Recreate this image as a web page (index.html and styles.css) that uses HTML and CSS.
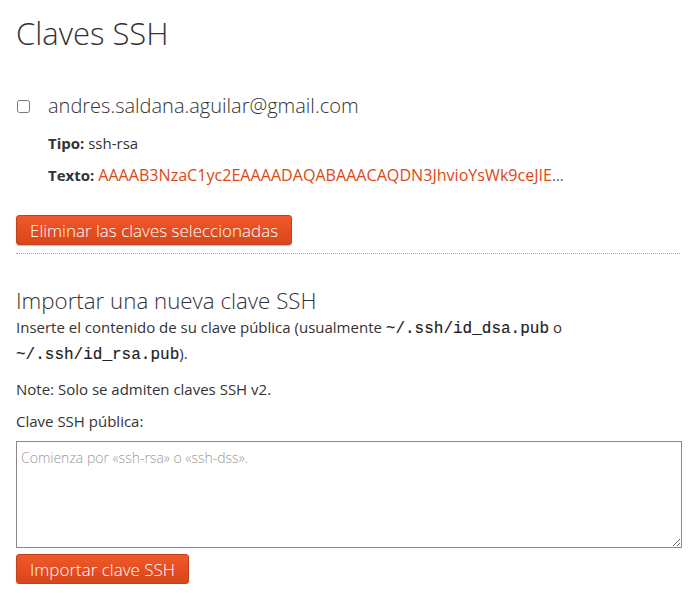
FILE: index.html
```html
<!DOCTYPE html>
<html lang="es">
<head>
<meta charset="utf-8">
<title>Claves SSH</title>
<link rel="stylesheet" href="styles.css">
</head>
<body>
<main class="page">
  <h1 class="title">Claves SSH</h1>
  <form class="keys">
    <div class="key">
      <label class="key-head">
        <input type="checkbox" class="key-check">
        <span class="key-name">andres.saldana.aguilar@gmail.com</span>
      </label>
      <div class="key-meta">
        <p class="meta-row"><b>Tipo:</b> ssh-rsa</p>
        <p class="meta-row"><b>Texto:</b> <span class="key-text">AAAAB3NzaC1yc2EAAAADAQABAAACAQDN3JhvioYsWk9ceJIE</span><span class="ellipsis">…</span></p>
      </div>
    </div>
    <button type="button" class="btn">Eliminar las claves seleccionadas</button>
  </form>
  <hr class="sep">
  <section class="import">
    <h2 class="subtitle">Importar una nueva clave SSH</h2>
    <p class="desc">Inserte el contenido de su clave pública (usualmente <code>~/.ssh/id_dsa.pub</code> o <code>~/.ssh/id_rsa.pub</code>).</p>
    <p class="note">Note: Solo se admiten claves SSH v2.</p>
    <label class="field-label" for="k">Clave SSH pública:</label>
    <textarea id="k" class="field" placeholder="Comienza por «ssh-rsa» o «ssh-dss»."></textarea>
    <button type="button" class="btn">Importar clave SSH</button>
  </section>
</main>
</body>
</html>
```
FILE: styles.css
```css
html, body { margin: 0; padding: 0; background: #fff; }
body {
  font-family: "Open Sans", "Noto Sans", sans-serif;
  color: #333;
  font-size: 15px;
}
.page { padding: 0 12px 0 16px; }
.title {
  margin: 0;
  padding-top: 13px;
  font-size: 31px;
  font-weight: 300;
  line-height: 40px;
  color: #333;
}
.keys { margin-top: 41px; }
.key-head { display: flex; align-items: center; gap: 18px; }
.key-check {
  margin: 0 0 0 1px;
  width: 13px; height: 13px;
}
.key-name { font-size: 20px; font-weight: 300; line-height: 24px; }
.key-meta { padding-left: 32px; margin-top: 9px; }
.meta-row { margin: 0; font-size: 15px; line-height: 32px; }
.meta-row b { font-weight: 700; color: #333; }
.key-text { color: #dd4814; font-size: 16.1px; }
.ellipsis { color: #555; font-size: 15px; }
.btn {
  display: block;
  margin-top: 24px;
  height: 30px;
  padding: 0 13px;
  font-family: inherit;
  font-size: 17px;
  font-weight: 300;
  color: #fff;
  border: 1px solid #c2401a;
  border-radius: 3px;
  background: linear-gradient(#f0582a, #d8461a);
  box-shadow: 0 1px 1px rgba(0,0,0,0.25);
}
.sep {
  margin: 8px 2px 0 0;
  border: 0;
  border-top: 1px dotted #aaa;
}
.import { margin-top: 34px; }
.subtitle {
  margin: 0;
  font-size: 22.3px;
  font-weight: 300;
  line-height: 26px;
}
.desc { margin: 0; font-size: 15px; line-height: 26px; }
.desc code {
  font-family: "Liberation Mono", "DejaVu Sans Mono", monospace;
  font-weight: 400;
  font-size: 16px;
  line-height: 1;
  color: #222;
  -webkit-text-stroke: 0.15px #222;
}
.note { margin: 10px 0 0; font-size: 15px; line-height: 26px; }
.field-label { display: block; margin-top: 6px; font-size: 15px; line-height: 26px; }
.field {
  display: block;
  box-sizing: border-box;
  margin-top: 7px;
  width: 100%;
  height: 107px;
  border: 1px solid #888;
  padding: 6px 4px;
  font-family: inherit;
  font-size: 14px;
  font-weight: 300;
  color: #333;
  resize: vertical;
}
.field::placeholder { color: #999; }
.import .btn { margin-top: 6px; }
```
